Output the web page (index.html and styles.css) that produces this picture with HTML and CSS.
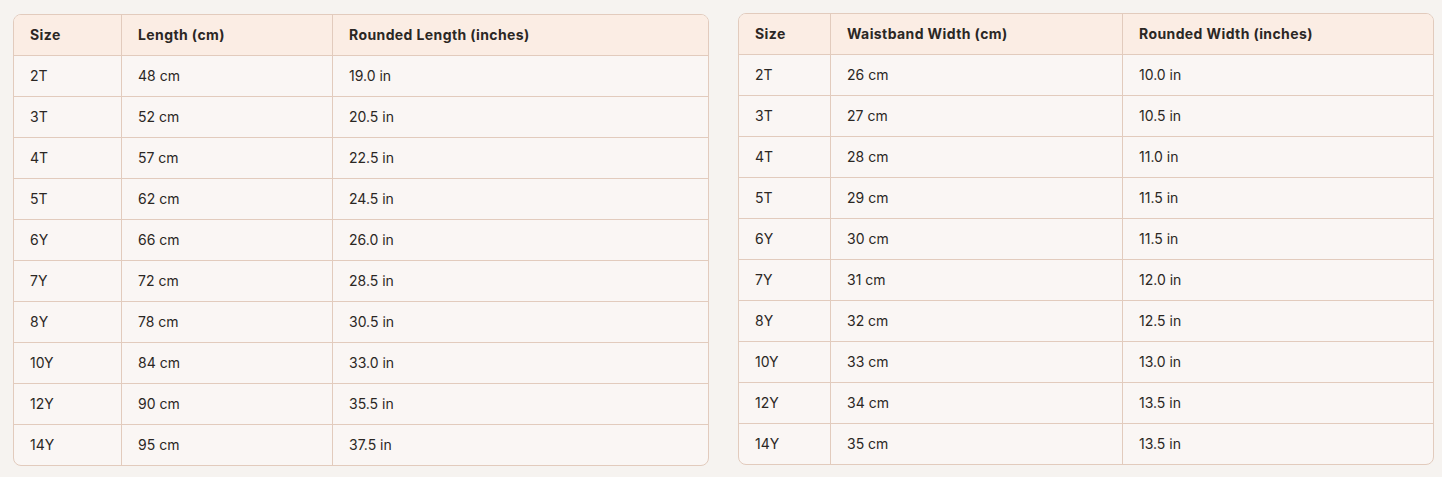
FILE: index.html
```html
<!DOCTYPE html>
<html>
<head>
<meta charset="utf-8">
<link rel="stylesheet" href="styles.css">
</head>
<body>
<div class="page">
  <div class="card">
    <table class="chart">
      <colgroup><col class="c-size-l"><col class="c-mid-l"><col></colgroup>
      <thead><tr><th>Size</th><th>Length (cm)</th><th>Rounded Length (inches)</th></tr></thead>
      <tbody>
        <tr><td>2T</td><td>48 cm</td><td>19.0 in</td></tr>
        <tr><td>3T</td><td>52 cm</td><td>20.5 in</td></tr>
        <tr><td>4T</td><td>57 cm</td><td>22.5 in</td></tr>
        <tr><td>5T</td><td>62 cm</td><td>24.5 in</td></tr>
        <tr><td>6Y</td><td>66 cm</td><td>26.0 in</td></tr>
        <tr><td>7Y</td><td>72 cm</td><td>28.5 in</td></tr>
        <tr><td>8Y</td><td>78 cm</td><td>30.5 in</td></tr>
        <tr><td>10Y</td><td>84 cm</td><td>33.0 in</td></tr>
        <tr><td>12Y</td><td>90 cm</td><td>35.5 in</td></tr>
        <tr><td>14Y</td><td>95 cm</td><td>37.5 in</td></tr>
      </tbody>
    </table>
  </div>
  <div class="card card-right">
    <table class="chart">
      <colgroup><col class="c-size-r"><col class="c-mid-r"><col></colgroup>
      <thead><tr><th>Size</th><th>Waistband Width (cm)</th><th>Rounded Width (inches)</th></tr></thead>
      <tbody>
        <tr><td>2T</td><td>26 cm</td><td>10.0 in</td></tr>
        <tr><td>3T</td><td>27 cm</td><td>10.5 in</td></tr>
        <tr><td>4T</td><td>28 cm</td><td>11.0 in</td></tr>
        <tr><td>5T</td><td>29 cm</td><td>11.5 in</td></tr>
        <tr><td>6Y</td><td>30 cm</td><td>11.5 in</td></tr>
        <tr><td>7Y</td><td>31 cm</td><td>12.0 in</td></tr>
        <tr><td>8Y</td><td>32 cm</td><td>12.5 in</td></tr>
        <tr><td>10Y</td><td>33 cm</td><td>13.0 in</td></tr>
        <tr><td>12Y</td><td>34 cm</td><td>13.5 in</td></tr>
        <tr><td>14Y</td><td>35 cm</td><td>13.5 in</td></tr>
      </tbody>
    </table>
  </div>
</div>
</body>
</html>
```

FILE: styles.css
```css
* { box-sizing: border-box; }
html, body { margin: 0; padding: 0; background: #f6f3f0; }
body {
  font-family: "Inter", "Open Sans", sans-serif;
  font-size: 14px;
  color: #2b2724;
}
.page {
  display: grid;
  grid-template-columns: 696px 696px;
  column-gap: 29px;
  padding: 14px 8px 0 13px;
  align-items: start;
}
.card {
  border: 1px solid #e2cbbd;
  border-radius: 8px;
  overflow: hidden;
  background: #faf6f4;
}
.card-right { margin-top: -1px; }
.chart {
  width: 100%;
  border-collapse: separate;
  border-spacing: 0;
  table-layout: fixed;
}
.c-size-l { width: 108px; }
.c-mid-l { width: 211px; }
.c-size-r { width: 92px; }
.c-mid-r { width: 292px; }
.chart th, .chart td {
  height: 41px;
  padding: 0 16px 1px;
  text-align: left;
  vertical-align: middle;
  border-right: 1px solid #e2cbbd;
  border-bottom: 1px solid #e2cbbd;
  white-space: nowrap;
}
.chart th:last-child, .chart td:last-child { border-right: none; }
.chart tbody tr:last-child td { border-bottom: none; height: 40px; }
.chart th {
  background: #fbede4;
  font-weight: 700;
  letter-spacing: 0.4px;
}
```
